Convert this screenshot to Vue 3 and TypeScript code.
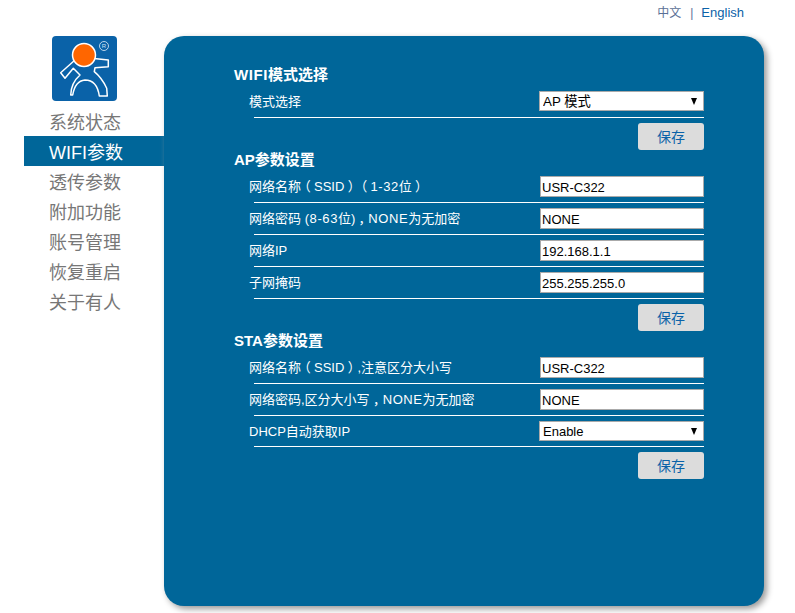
<script setup lang="ts">
const nav = ['系统状态', 'WIFI参数', '透传参数', '附加功能', '账号管理', '恢复重启', '关于有人']
const apRows = [
  { label: '网络名称（SSID）（1-32位）', value: 'USR-C322' },
  { label: '网络密码 (8-63位)，NONE为无加密', value: 'NONE' },
  { label: '网络IP', value: '192.168.1.1' },
  { label: '子网掩码', value: '255.255.255.0' },
]
const staRows = [
  { label: '网络名称（SSID）,注意区分大小写', value: 'USR-C322' },
  { label: '网络密码,区分大小写，NONE为无加密', value: 'NONE' },
]
const parts = (s: string): string[] => s.split(/([（），]|NONE|\(8-63|1-32)/).filter(Boolean)
const partClass = (p: string): string => {
  if (p === '（' || p === '）' || p === '，') return 'punct'
  if (p === 'NONE' || p === '(8-63' || p === '1-32') return 'wide'
  return ''
}
</script>

<template>
  <div class="page">
    <div class="lang"><span class="zh">中文</span><i>|</i><span>English</span></div>
    <div class="main">
      <aside class="side">
        <div class="logo">
          <svg width="65" height="65" viewBox="0 0 65 65">
            <rect width="65" height="65" rx="4" fill="#0a62a8" />
            <path d="M39.7 22.3 L56.3 24 L56.3 30.7 L43 31.7 L42.3 35.7 Q50 42 54.7 52.3 L55.3 60 L47.3 60 Q45 44 33 44 Q23 45 20.7 59 L18.7 59 Q19 47 28 39 L21.3 32.3 L13 42.3 L8.7 36.7 L23 24" fill="none" stroke="#fff" stroke-width="1.5" stroke-linejoin="round" />
            <circle cx="32" cy="19" r="11.5" fill="#ff6600" stroke="#fff" stroke-width="1.5" />
            <circle cx="52" cy="10" r="4.5" fill="none" stroke="#cfe0f0" stroke-width="0.9" />
            <text x="52" y="12.2" text-anchor="middle" class="reg">R</text>
          </svg>
        </div>
        <nav class="menu">
          <div v-for="(n, i) in nav" :key="n" class="item" :class="{ active: i === 1 }">{{ n }}</div>
        </nav>
      </aside>
      <section class="panel">
        <h3><span class="latin">WIFI</span>模式选择</h3>
        <div class="row">
          <span class="label">模式选择</span>
          <div class="sel"><select><option>AP 模式</option></select></div>
        </div>
        <div class="btn-row"><button>保存</button></div>

        <h3>AP参数设置</h3>
        <div v-for="r in apRows" :key="r.label" class="row">
          <span class="label"><span v-for="(p, i) in parts(r.label)" :key="i" :class="partClass(p)">{{ p }}</span></span>
          <input :value="r.value" />
        </div>
        <div class="btn-row"><button>保存</button></div>

        <h3>STA参数设置</h3>
        <div v-for="r in staRows" :key="r.label" class="row">
          <span class="label"><span v-for="(p, i) in parts(r.label)" :key="i" :class="partClass(p)">{{ p }}</span></span>
          <input :value="r.value" />
        </div>
        <div class="row last">
          <span class="label">DHCP自动获取IP</span>
          <div class="sel"><select class="small"><option>Enable</option></select></div>
        </div>
        <div class="btn-row"><button>保存</button></div>
      </section>
    </div>
  </div>
</template>

<style scoped>
.page {
  width: 795px;
  height: 613px;
  overflow: hidden;
  background: #fff;
  font-family: "Liberation Sans", "Noto Sans CJK SC", sans-serif;
}
.lang {
  height: 36px;
  box-sizing: border-box;
  padding: 5px 51px 0 0;
  display: flex;
  justify-content: flex-end;
  color: #0a62a8;
  font-size: 13px;
  line-height: 16px;
}
.lang .zh { color: #5a6f96; font-size: 12px; }
.lang i { font-style: normal; margin: 0 8px 0 9px; color: #5a6f96; font-size: 12px; }
.main { display: flex; align-items: flex-start; }
.side { width: 140px; margin-left: 24px; }
.logo { height: 70px; padding-left: 28px; }
.logo svg { display: block; }
.reg { font: 6px "Liberation Sans", sans-serif; fill: #cfe0f0; }
.item {
  height: 30px;
  line-height: 34px;
  padding-left: 25px;
  font-size: 18px;
  color: #777;
}
.item.active { background: #006699; color: #fff; }
.panel {
  width: 600px;
  height: 570px;
  box-sizing: border-box;
  padding: 30px 60px 0 70px;
  background: #006699;
  border-radius: 20px;
  box-shadow: 3px 3px 6px #999;
}
h3 {
  margin: 0;
  height: 20px;
  line-height: 17px;
  font-size: 15px;
  font-weight: bold;
  color: #fff;
}
.latin { letter-spacing: 0.6px; }
.row {
  height: 32px;
  margin-left: 20px;
  box-sizing: border-box;
  border-bottom: 1px solid #fff;
  display: flex;
  align-items: center;
  justify-content: space-between;
  padding-bottom: 1px;
}
.row.last { height: 31px; padding-bottom: 0; }
.label {
  margin-left: -5px;
  margin-top: -2px;
  font-size: 13px;
  color: #fff;
  white-space: nowrap;
  text-spacing-trim: space-all;
}
.punct {
  font-feature-settings: "halt";
  padding: 0 3.25px;
}
.wide { letter-spacing: 0.6px; }
input {
  width: 164px;
  height: 21px;
  box-sizing: border-box;
  border: 1px solid #aaa;
  background: #fff;
  padding: 3px 1px 0;
  font: 13px "Liberation Sans", sans-serif;
  color: #000;
  outline: none;
}
.sel { position: relative; width: 165px; height: 20px; }
.sel::after {
  content: "";
  position: absolute;
  right: 7px;
  top: 7px;
  border-left: 3.5px solid transparent;
  border-right: 3.5px solid transparent;
  border-top: 7px solid #000;
}
select {
  appearance: none;
  display: block;
  width: 165px;
  height: 20px;
  box-sizing: border-box;
  border: 1px solid #aaa;
  border-radius: 0;
  background: #fff;
  padding: 0 3px;
  font: 13.33px "Liberation Sans", "Noto Sans CJK SC", sans-serif;
  color: #000;
}
select.small { font-size: 13px; }
.btn-row { display: flex; justify-content: flex-end; height: 33px; padding-top: 5px; box-sizing: border-box; }
button {
  width: 66px;
  height: 27px;
  padding: 0 0 2px;
  border: 0;
  border-radius: 3px;
  background: #dcdcdc;
  color: #0a62a8;
  font: 14px "Liberation Sans", "Noto Sans CJK SC", sans-serif;
}
</style>
